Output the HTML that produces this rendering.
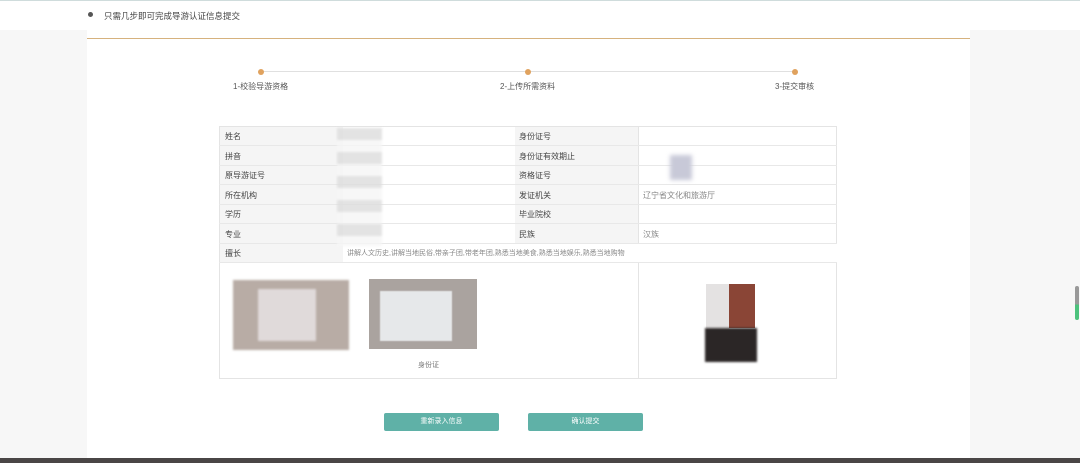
<!DOCTYPE html>
<html><head><meta charset="utf-8"><style>
*{margin:0;padding:0;box-sizing:border-box}
body{width:1080px;height:463px;background:#f7f7f7;font-family:"Liberation Sans","Noto Sans CJK SC",sans-serif;position:relative;overflow:hidden;color:#555}
.abs{position:absolute}
.t{font-size:8px;white-space:nowrap}
</style></head><body>
<div class="abs" style="left:0;top:0;width:1080px;height:30px;background:#fff;border-top:1px solid #cfdcdc"></div>
<div class="abs" style="left:88px;top:12px;width:5px;height:5px;border-radius:50%;background:#555"></div>
<div class="abs t" style="left:104px;top:10px;font-size:8.5px;color:#444">只需几步即可完成导游认证信息提交</div>
<div class="abs" style="left:87px;top:30px;width:883px;height:428px;background:#fff"></div>
<div class="abs" style="left:87px;top:38px;width:883px;height:1px;background:#d6b27e"></div>
<div class="abs" style="left:261px;top:71px;width:534px;height:1px;background:#e0e0e0"></div>
<div class="abs" style="left:258px;top:69px;width:6px;height:6px;border-radius:50%;background:#e0a25e"></div>
<div class="abs" style="left:525px;top:69px;width:6px;height:6px;border-radius:50%;background:#e0a25e"></div>
<div class="abs" style="left:792px;top:69px;width:6px;height:6px;border-radius:50%;background:#e0a25e"></div>
<div class="abs t" style="left:233px;top:81px">1-校验导游资格</div>
<div class="abs t" style="left:500px;top:81px">2-上传所需资料</div>
<div class="abs t" style="left:775px;top:81px">3-提交审核</div>

<div class="abs" style="left:219px;top:126px;width:618px;height:253px;border:1px solid #e4e4e4"></div>
<div class="abs" style="left:220px;top:127px;width:123px;height:135px;background:#f5f5f5"></div>
<div class="abs" style="left:515px;top:127px;width:123px;height:117px;background:#f5f5f5"></div>
<div class="abs" style="left:638px;top:127px;width:1px;height:251px;background:#e4e4e4"></div>
<div class="abs" style="left:638px;top:243px;width:199px;height:19px;background:#fff"></div>
<div class="abs" style="left:219px;top:145px;width:618px;height:1px;background:#e8e8e8"></div>
<div class="abs" style="left:219px;top:165px;width:618px;height:1px;background:#e8e8e8"></div>
<div class="abs" style="left:219px;top:184px;width:618px;height:1px;background:#e8e8e8"></div>
<div class="abs" style="left:219px;top:204px;width:618px;height:1px;background:#e8e8e8"></div>
<div class="abs" style="left:219px;top:223px;width:618px;height:1px;background:#e8e8e8"></div>
<div class="abs" style="left:219px;top:243px;width:618px;height:1px;background:#e8e8e8"></div>
<div class="abs" style="left:219px;top:262px;width:618px;height:1px;background:#e8e8e8"></div>
<div class="abs t" style="left:225px;top:131px;color:#444">姓名</div>
<div class="abs t" style="left:225px;top:151px;color:#444">拼音</div>
<div class="abs t" style="left:225px;top:170px;color:#444">原导游证号</div>
<div class="abs t" style="left:225px;top:190px;color:#444">所在机构</div>
<div class="abs t" style="left:225px;top:209px;color:#444">学历</div>
<div class="abs t" style="left:225px;top:229px;color:#444">专业</div>
<div class="abs t" style="left:225px;top:248px;color:#444">擅长</div>
<div class="abs t" style="left:519px;top:131px;color:#444">身份证号</div>
<div class="abs t" style="left:519px;top:151px;color:#444">身份证有效期止</div>
<div class="abs t" style="left:519px;top:170px;color:#444">资格证号</div>
<div class="abs t" style="left:519px;top:190px;color:#444">发证机关</div>
<div class="abs t" style="left:519px;top:209px;color:#444">毕业院校</div>
<div class="abs t" style="left:519px;top:229px;color:#444">民族</div>
<div class="abs t" style="left:643px;top:190px;color:#888">辽宁省文化和旅游厅</div>
<div class="abs t" style="left:643px;top:229px;color:#888">汉族</div>
<div class="abs t" style="left:347px;top:248px;color:#888;font-size:7px">讲解人文历史,讲解当地民俗,带亲子团,带老年团,熟悉当地美食,熟悉当地娱乐,熟悉当地购物</div>
<!-- blur blocks -->
<div class="abs" style="left:337px;top:128px;width:45px;height:118px;background:repeating-linear-gradient(180deg,#ddd 0 12px,#f6f6f6 12px 24px);opacity:.8;filter:blur(1px)"></div>
<div class="abs" style="left:670px;top:155px;width:22px;height:25px;background:#c8c9d8;filter:blur(2px)"></div>
<!-- images -->
<div class="abs" style="left:233px;top:280px;width:116px;height:70px;background:#b8aca5;filter:blur(1px)"></div>
<div class="abs" style="left:258px;top:289px;width:58px;height:52px;background:#e0dada;filter:blur(1px)"></div>
<div class="abs" style="left:369px;top:279px;width:108px;height:70px;background:#aaa39f"></div>
<div class="abs" style="left:380px;top:291px;width:72px;height:50px;background:#e6e8ea;filter:blur(.5px)"></div>
<div class="abs t" style="left:418px;top:360px;color:#777;font-size:7px">身份证</div>
<div class="abs" style="left:706px;top:284px;width:35px;height:44px;background:#e4e2e2"></div>
<div class="abs" style="left:729px;top:284px;width:26px;height:44px;background:#8a4536"></div>
<div class="abs" style="left:705px;top:328px;width:52px;height:34px;background:#2b2626;filter:blur(1px)"></div>
<!-- buttons -->
<div class="abs" style="left:384px;top:413px;width:115px;height:18px;background:#5fb1a7;border-radius:2px;color:#fff;font-size:7px;text-align:center;line-height:18px">重新录入信息</div>
<div class="abs" style="left:528px;top:413px;width:115px;height:18px;background:#5fb1a7;border-radius:2px;color:#fff;font-size:7px;text-align:center;line-height:18px">确认提交</div>
<div class="abs" style="left:1075px;top:286px;width:4px;height:34px;border-radius:2px;background:linear-gradient(#999 0 55%,#4cc27c 55%)"></div>
<div class="abs" style="left:0;top:458px;width:1080px;height:5px;background:#4a4646"></div>
</body></html>
